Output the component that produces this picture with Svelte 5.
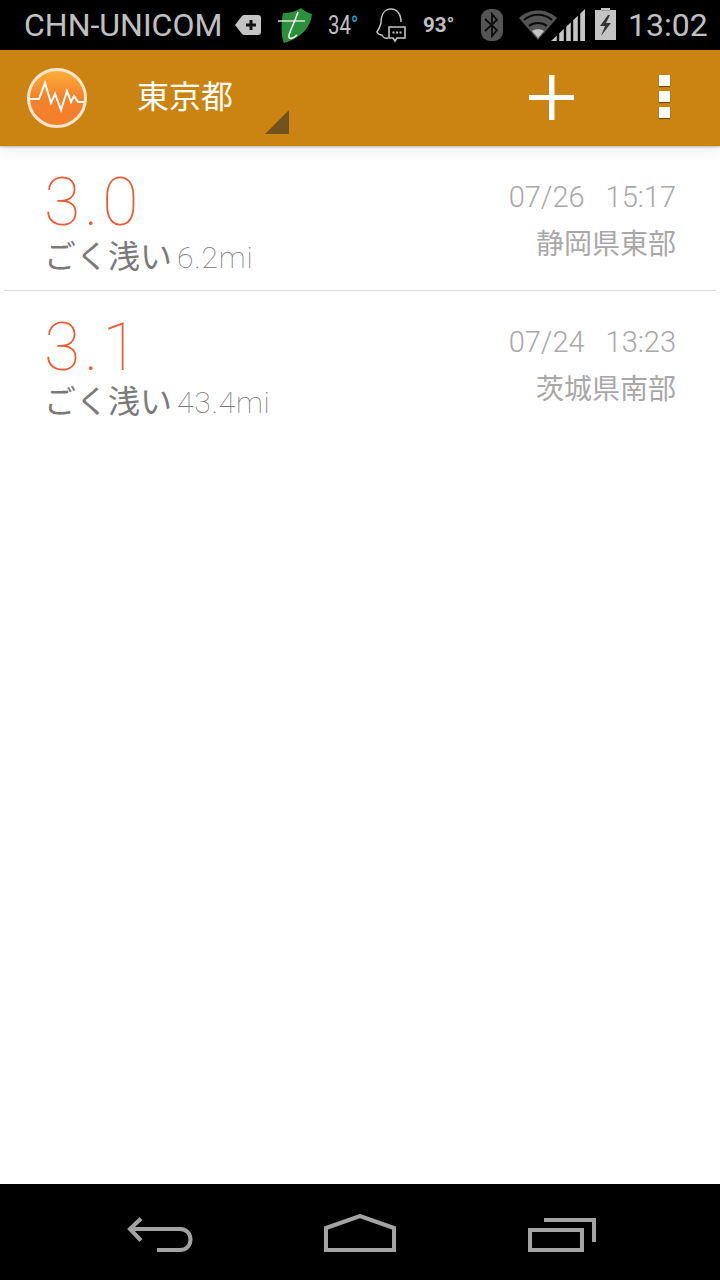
<script lang="ts">
  type Quake = {
    magnitude: string;
    level: string;
    distance: string;
    date: string;
    time: string;
    region: string;
  };

  const quakes: Quake[] = [
    { magnitude: "3.0", level: "ごく浅い", distance: "6.2mi", date: "07/26", time: "15:17", region: "静岡県東部" },
    { magnitude: "3.1", level: "ごく浅い", distance: "43.4mi", date: "07/24", time: "13:23", region: "茨城県南部" },
  ];
</script>

<div class="screen">
  <header class="statusBar">
    <span class="carrier">CHN-UNICOM</span>
    <svg class="tag" width="26" height="20" viewBox="0 0 26 20">
      <path d="M0 10 L7 1 Q8 0 9 0 H23 Q26 0 26 3 V17 Q26 20 23 20 H9 Q8 20 7 19 Z" fill="#c4c4c4" />
      <path d="M11 10 H21 M16 5 V15" stroke="#111" stroke-width="3" />
    </svg>
    <svg class="shield" width="36" height="36" viewBox="0 0 36 36">
      <path d="M5 5 C12 5 19 3 23 0 C26 3 30 5 34 6 C33 18 24 30 6 35 C3 28 3 15 5 5 Z" fill="#2c8f3c" />
      <path d="M0 13 H27" stroke="#d8e6d8" stroke-width="1.5" />
      <path d="M20 4 C17 13 13 21 11 27 C10 32 15 31 19 27" stroke="#f0f4f0" stroke-width="1.6" fill="none" />
    </svg>
    <span class="temp">34<em>°</em></span>
    <svg class="penguin" width="33" height="36" viewBox="0 0 33 36">
      <path d="M12 30 C8 31 7 29 6 27 C4 27 2 26 1 24 C3 21 4 19 5 15 C5 6 9 1 15 1 C21 1 25 6 25 14" fill="none" stroke="#c4c4c4" stroke-width="1.5" />
      <path d="M13 19 H29 V30 H21 L19 33 L17 30 H13 Z" fill="#000" stroke="#c4c4c4" stroke-width="1.6" />
      <path d="M16.500 24.500 h2 M20 24.500 h2 M23.500 24.500 h2" stroke="#c4c4c4" stroke-width="2" />
    </svg>
    <span class="heat">93°</span>
    <svg class="bluetooth" width="22" height="32" viewBox="0 0 22 32">
      <rect width="22" height="32" rx="9" fill="#555" />
      <path d="M4 10 L16 21 L11 27 V5 L16 11 L4 22" fill="none" stroke="#0c0c0c" stroke-width="1.800" />
    </svg>
    <svg class="wifi" width="66" height="32" viewBox="0 0 66 32">
      <path d="M0 9 C10 -1 28 -1 38 9 L19 31 Z" fill="#555" />
      <path d="M5 11 C13 4 25 4 33 11 M10 17 C15 13 23 13 28 17" fill="none" stroke="#0c0c0c" stroke-width="2.200" />
      <path d="M13 22 C16 19.500 22 19.500 25 22 L19 29 Z" fill="#c4c4c4" />
      <path d="M32 32 L66 0 V32 Z" fill="#c4c4c4" />
      <path d="M39 20 V32 M46 14 V32 M53 7 V32 M60 2 V32" stroke="#000" stroke-width="2.400" />
    </svg>
    <svg class="battery" width="21" height="32" viewBox="0 0 21 32">
      <path d="M6 0 H15 V2 H21 V32 H0 V2 H6 Z" fill="#c4c4c4" />
      <path d="M6 2 H15 V2.500 H6 Z" fill="#777" />
      <path d="M13 7 L5 18 H10 L6 28 L16 15 H11 L15 7 Z" fill="#333" />
    </svg>
    <span class="clock">13:02</span>
  </header>

  <div class="actionBar">
    <svg class="logo" width="62" height="62" viewBox="0 0 62 62">
      <defs>
        <linearGradient id="logoFill" x1="0" y1="0" x2="0" y2="1">
          <stop offset="0" stop-color="#fbb03a" />
          <stop offset="0.5" stop-color="#f4812c" />
          <stop offset="1" stop-color="#f47f2c" />
        </linearGradient>
      </defs>
      <circle cx="31" cy="31" r="28.500" fill="url(#logoFill)" stroke="#f7e6cf" stroke-width="3" />
      <path d="M4 32 H13 L19 16 L25 36 L29 27 L35 43 L41 24 L45 35 L48 29 L52 35 H58" fill="none" stroke="#fff" stroke-width="2" />
    </svg>
    <div class="city">
      <span>東京都</span>
      <div class="corner"></div>
    </div>
    <svg class="plus" width="46" height="46" viewBox="0 0 46 46">
      <path d="M20 0 H25.500 V20 H45 V25 H25.500 V45 H20 V25 H0 V20 H20 Z" fill="#fff" />
    </svg>
    <div class="more">
      <i></i>
      <i></i>
      <i></i>
    </div>
  </div>

  <main class="list">
    {#each quakes as q}
      <div class="row">
        <div class="left">
          <div class="mag">{q.magnitude}</div>
          <div class="info">
            <span class="level">{q.level}</span>
            <span class="dist">{q.distance}</span>
          </div>
        </div>
        <div class="right">
          <div class="when">
            <span>{q.date}</span>
            <span>{q.time}</span>
          </div>
          <div class="region">{q.region}</div>
        </div>
      </div>
    {/each}
  </main>

  <nav class="navBar">
    <svg width="66" height="36" viewBox="0 0 66 36">
      <path d="M14 2.500 L3 13 L14 24.500 M3 13 H53 C67 13 67 34 53 34 H30" fill="none" stroke="#a3a3a3" stroke-width="4" />
    </svg>
    <svg class="home" width="72" height="38" viewBox="0 0 72 38">
      <path d="M2 36 V14 L36 2 L70 14 V36 Z" fill="none" stroke="#a3a3a3" stroke-width="4" />
    </svg>
    <svg width="68" height="34" viewBox="0 0 68 34">
      <path d="M2 12 H54 V32 H2 Z" fill="none" stroke="#a3a3a3" stroke-width="4" />
      <path d="M16 2 H66 V24" fill="none" stroke="#a3a3a3" stroke-width="4" />
    </svg>
  </nav>
</div>

<style>
  :global(body) {
    margin: 0;
    background: #fff;
  }

  .screen {
    width: 720px;
    height: 1280px;
    display: flex;
    flex-direction: column;
    font-family: Roboto, "Noto Sans CJK JP", sans-serif;
    overflow: hidden;
  }

  .statusBar {
    height: 50px;
    flex: none;
    background: #000;
    color: #c0c0c0;
    display: flex;
    align-items: center;
    padding-left: 24px;
    box-sizing: border-box;
  }

  .statusBar svg {
    flex: none;
  }

  .carrier {
    font-size: 32px;
    width: 198px;
    white-space: nowrap;
  }

  .tag {
    margin-left: 13px;
  }

  .shield {
    margin-left: 17px;
    margin-top: 2px;
  }

  .temp {
    margin-left: 14px;
    width: 33px;
    font-size: 26px;
    transform: scaleX(0.78);
    transform-origin: left;
    white-space: nowrap;
  }

  .temp em {
    font-style: normal;
    color: #2aa3d8;
  }

  .penguin {
    margin-left: 15px;
    margin-top: 2px;
  }

  .heat {
    margin-left: 14px;
    width: 31px;
    font-size: 20.5px;
    font-weight: 700;
    white-space: nowrap;
  }

  .bluetooth {
    margin-left: 27px;
  }

  .wifi {
    margin-left: 16px;
  }

  .battery {
    margin-left: 10px;
    margin-top: -2px;
  }

  .clock {
    margin-left: 12px;
    font-size: 32px;
  }

  .actionBar {
    height: 96px;
    flex: none;
    background: #cb8412;
    display: flex;
    align-items: center;
    box-shadow: 0 1px 2px rgba(0, 0, 0, 0.25), 0 4px 12px rgba(0, 0, 0, 0.08);
    position: relative;
    z-index: 1;
    padding-left: 26px;
    box-sizing: border-box;
  }

  .logo {
    flex: none;
  }

  .city {
    width: 152px;
    height: 96px;
    margin-left: 49px;
    position: relative;
    color: #fff;
    font-size: 32px;
    line-height: 94px;
    white-space: nowrap;
  }

  .corner {
    position: absolute;
    right: 0;
    top: 60px;
    width: 24px;
    height: 24px;
    background: #715320;
    clip-path: polygon(100% 0, 100% 100%, 0 100%);
  }

  .plus {
    flex: none;
    margin-left: 240px;
  }

  .more {
    margin-left: 84px;
    display: flex;
    flex-direction: column;
    gap: 5px;
    margin-top: -3px;
  }

  .more i {
    display: block;
    width: 11px;
    height: 11px;
    background: #fff;
    box-shadow: 0 1px 1px rgba(70, 40, 0, 0.6);
  }

  .list {
    flex: 1;
    background: #fff;
  }

  .row {
    height: 145px;
    margin: 0 4px;
    padding: 0 40px 0 40px;
    box-sizing: border-box;
    border-bottom: 1px solid #dedede;
    display: flex;
    justify-content: space-between;
  }

  .row:last-child {
    border-bottom: 0;
  }

  .mag {
    color: #ee5a30;
    font-size: 66px;
    font-weight: 100;
    line-height: 66px;
    margin-top: 24px;
    letter-spacing: 4px;
  }

  .info {
    margin-top: 3px;
    display: flex;
    align-items: baseline;
    gap: 5px;
    white-space: nowrap;
  }

  .level {
    color: #7a7a7a;
    font-size: 32px;
    line-height: 36px;
  }

  .dist {
    color: #777;
    font-size: 30px;
    font-weight: 100;
    letter-spacing: 0.8px;
  }

  .right {
    text-align: right;
    color: #a8a8a8;
  }

  .when {
    margin-top: 33px;
    font-size: 29px;
    font-weight: 300;
    line-height: 36px;
    display: flex;
    gap: 21px;
    justify-content: flex-end;
  }

  .region {
    margin-top: 12px;
    font-size: 28px;
    line-height: 36px;
  }

  .navBar {
    height: 96px;
    flex: none;
    background: #000;
    display: flex;
    align-items: flex-end;
    padding: 0 124px 28px 127px;
    justify-content: space-between;
    box-sizing: border-box;
  }

  .home {
    margin-left: -1px;
  }
</style>
